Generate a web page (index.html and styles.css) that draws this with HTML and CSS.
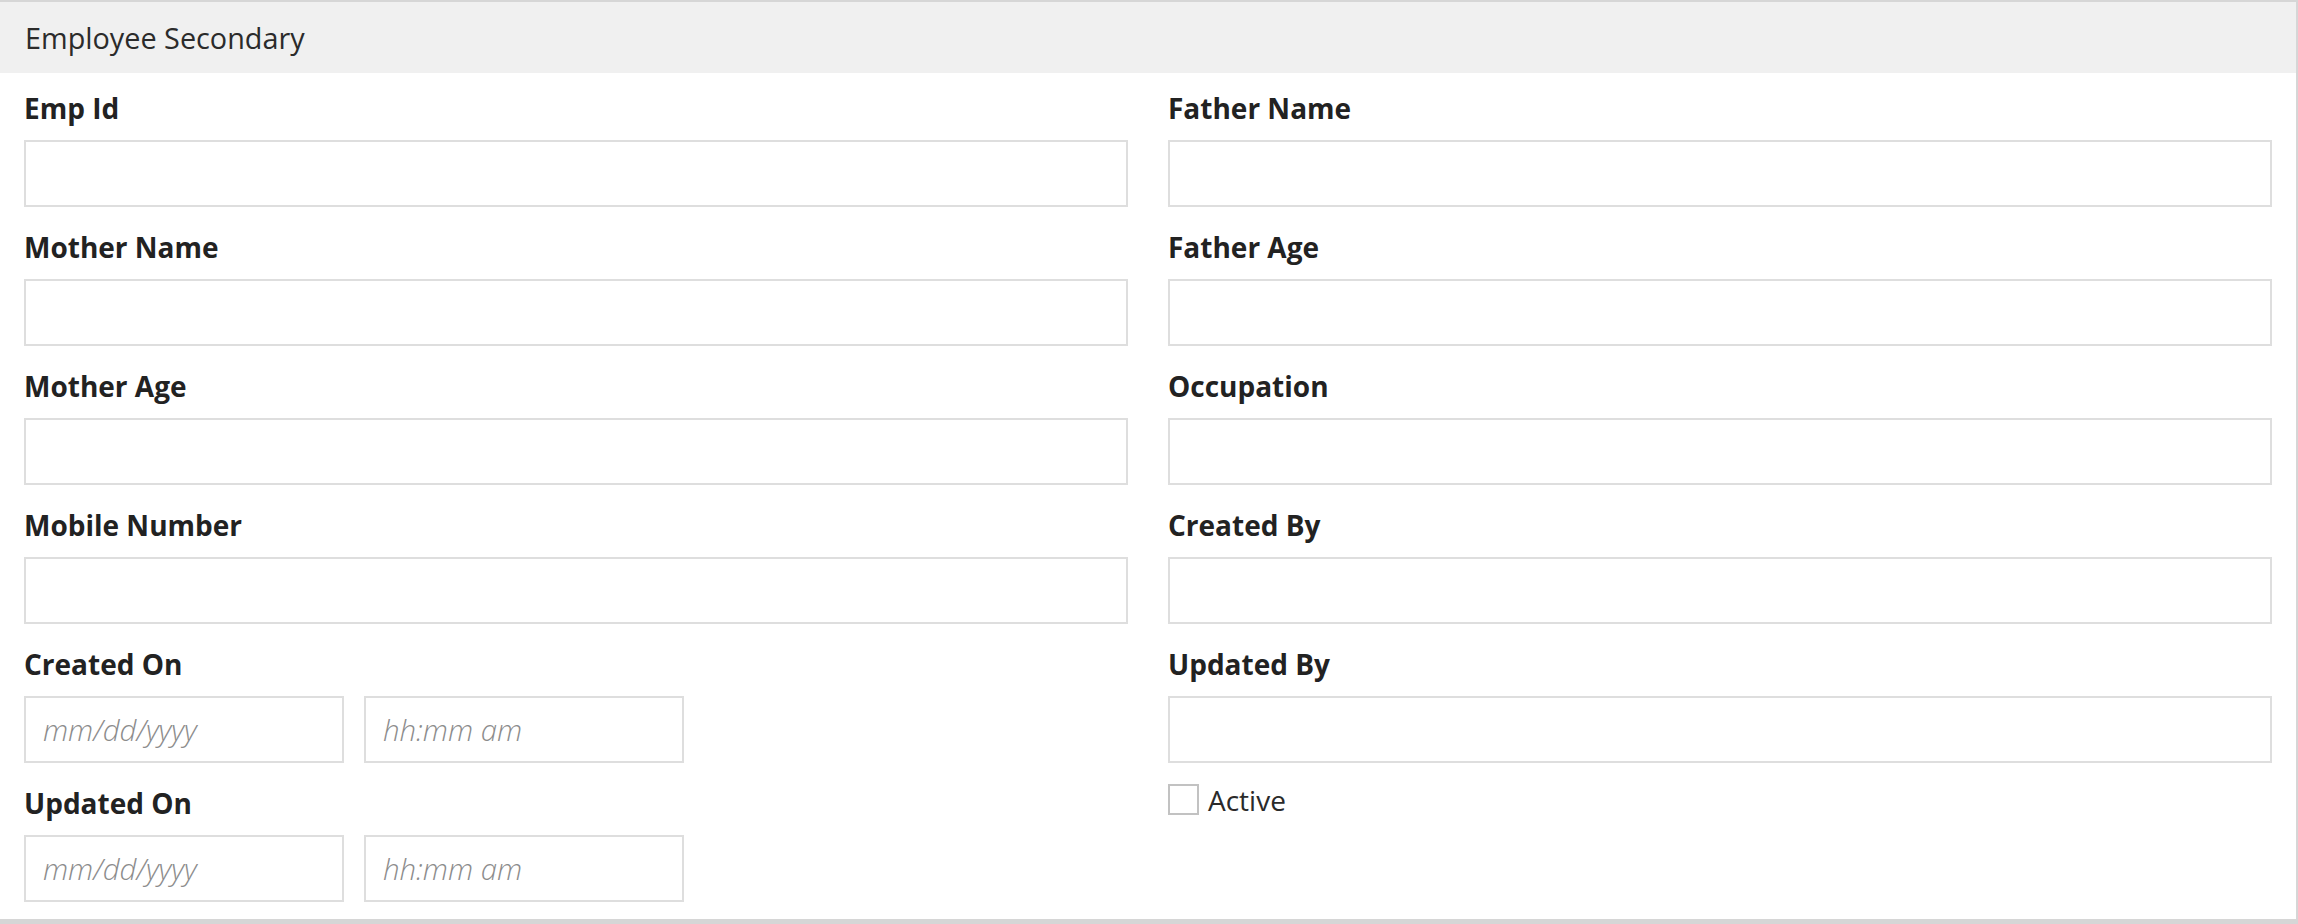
FILE: index.html
```html
<!DOCTYPE html>
<html lang="en">
<head>
<meta charset="utf-8">
<title>Employee Secondary</title>
<link rel="stylesheet" href="styles.css">
</head>
<body>
<div class="panel">
  <div class="panel-heading">Employee Secondary</div>
  <div class="panel-body">
    <div class="group"><label class="lbl">Emp Id</label><input class="ctl" type="text"></div>
    <div class="group"><label class="lbl">Father Name</label><input class="ctl" type="text"></div>
    <div class="group"><label class="lbl">Mother Name</label><input class="ctl" type="text"></div>
    <div class="group"><label class="lbl">Father Age</label><input class="ctl" type="text"></div>
    <div class="group"><label class="lbl">Mother Age</label><input class="ctl" type="text"></div>
    <div class="group"><label class="lbl">Occupation</label><input class="ctl" type="text"></div>
    <div class="group"><label class="lbl">Mobile Number</label><input class="ctl" type="text"></div>
    <div class="group"><label class="lbl">Created By</label><input class="ctl" type="text"></div>
    <div class="group"><label class="lbl">Created On</label>
      <div class="dt"><input class="ctl small" type="text" placeholder="mm/dd/yyyy"><input class="ctl small" type="text" placeholder="hh:mm am"></div>
    </div>
    <div class="group"><label class="lbl">Updated By</label><input class="ctl" type="text"></div>
    <div class="group"><label class="lbl">Updated On</label>
      <div class="dt"><input class="ctl small" type="text" placeholder="mm/dd/yyyy"><input class="ctl small" type="text" placeholder="hh:mm am"></div>
    </div>
    <div class="group check"><span class="box"></span><span class="check-text">Active</span></div>
  </div>
</div>
</body>
</html>
```

FILE: styles.css
```css
* { box-sizing: border-box; }
html, body { margin: 0; padding: 0; background: #ffffff; }
body { font-family: "Open Sans", "Liberation Sans", sans-serif; color: #333333; }

.panel {
  width: 2298px;
  border-top: 2px solid #d6d6d6;
  border-right: 2px solid #d6d6d6;
  border-bottom: 5px solid #d6d6d6;
  background: #ffffff;
}

.panel-heading {
  height: 71px;
  line-height: 71px;
  padding-left: 25px;
  background: #f0f0f0;
  font-size: 28.8px;
  color: #2b2b2b;
}

.panel-body {
  display: grid;
  grid-template-columns: 1104px 1104px;
  column-gap: 40px;
  row-gap: 20.1px;
  padding: 15px 24px 16.5px 24px;
}

.group { display: flex; flex-direction: column; }

.lbl {
  display: block;
  font-size: 28px;
  line-height: 40px;
  font-weight: 700;
  color: #222222;
  margin-bottom: 12px;
}

.ctl {
  display: block;
  width: 100%;
  height: 67px;
  border: 2px solid #dedede;
  border-radius: 0;
  background: #ffffff;
  padding: 0 17px;
  font-family: "Open Sans", "Liberation Sans", sans-serif;
  font-size: 29.4px;
  color: #333333;
  outline: none;
}

.ctl::placeholder {
  color: #8c8c8c;
  font-style: italic;
  font-weight: 300;
}

.dt { display: flex; gap: 20px; }
.ctl.small { width: 320px; }

.check {
  flex-direction: row;
  align-items: flex-start;
  gap: 9px;
  padding-top: 1px;
}

.box {
  width: 31px;
  height: 31px;
  border: 2px solid #c2c2c2;
  background: #ffffff;
  flex: none;
}

.check-text {
  font-size: 28px;
  line-height: 32px;
  color: #2a2a2a;
}
```
